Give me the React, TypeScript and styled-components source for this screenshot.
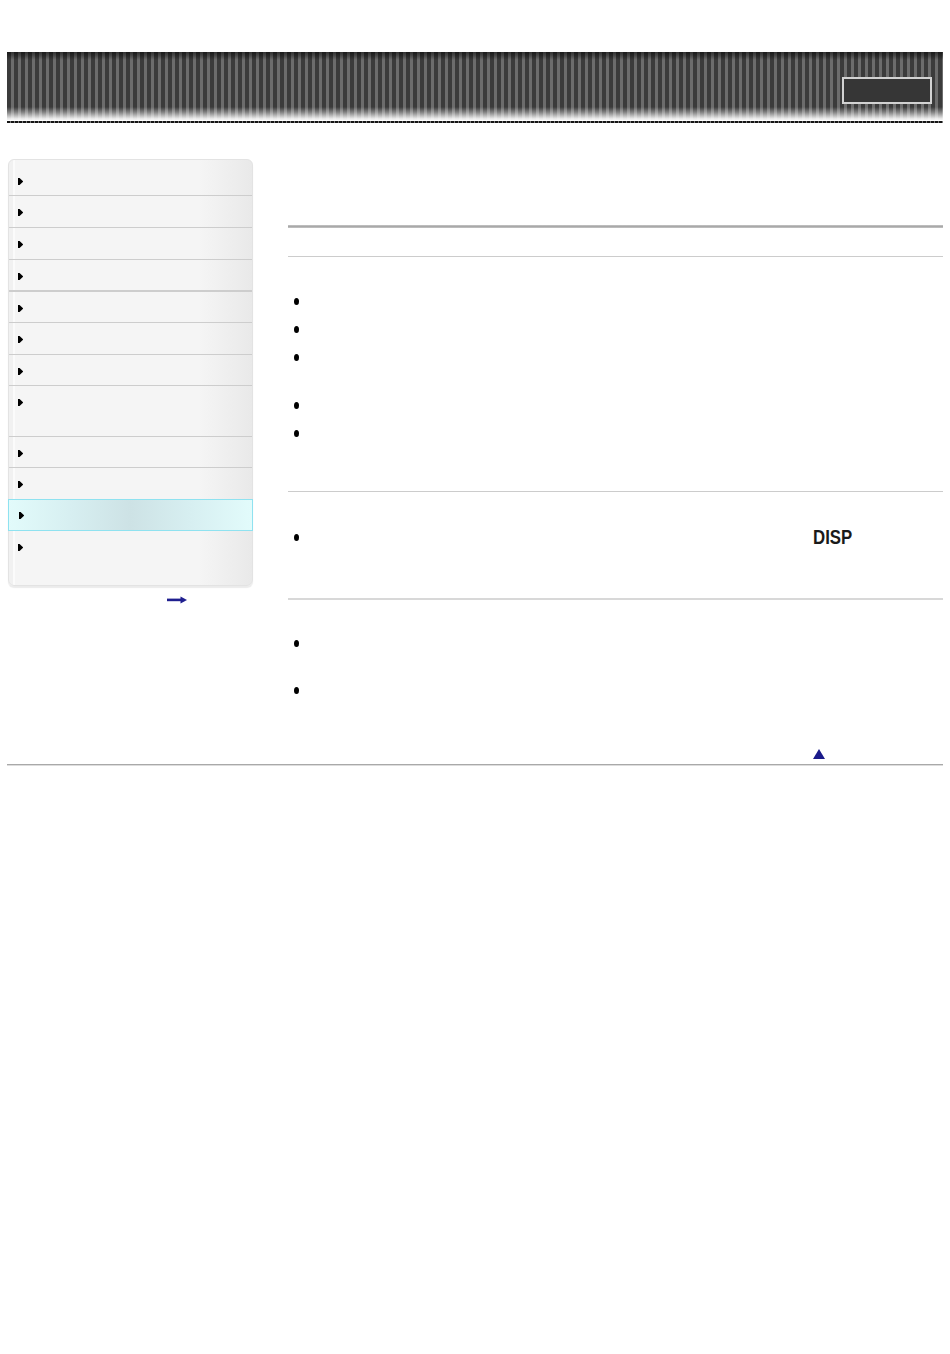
import styled, { createGlobalStyle } from "styled-components";

const GlobalStyle = createGlobalStyle`
  html, body {
    margin: 0;
    padding: 0;
    background: #fff;
  }
  body {
    font-family: "Liberation Sans", Arial, sans-serif;
    font-size: 13px;
    color: #000;
  }
  * {
    box-sizing: border-box;
  }
`;

const Page = styled.div`
  width: 950px;
  padding: 52px 7px 0;
`;

const Header = styled.header`
  height: 68px;
  display: flex;
  justify-content: flex-end;
  align-items: flex-start;
  padding: 25px 11px 0 0;
  background:
    linear-gradient(
      to bottom,
      rgba(0, 0, 0, 0.55) 0,
      rgba(0, 0, 0, 0.3) 4px,
      rgba(0, 0, 0, 0) 8px,
      rgba(0, 0, 0, 0) 55px,
      rgba(255, 255, 255, 0.35) 60px,
      rgba(255, 255, 255, 0.92) 67px
    ),
    repeating-linear-gradient(90deg, #3b3b3b 0 4px, #6c6c6c 4px 7px);
`;

const SearchBox = styled.div`
  width: 90px;
  height: 27px;
  border: 2px solid #d2d2d2;
  background: #363636;
`;

const DashRule = styled.div`
  height: 2px;
  margin-top: 1px;
  background: repeating-linear-gradient(90deg, #151515 0 3px, #7a7a7a 3px 4px);
`;

const Body = styled.div`
  display: flex;
  align-items: flex-start;
  margin-top: 36px;
`;

const SideColumn = styled.aside`
  width: 246px;
  flex: none;
  padding-left: 1px;
`;

const Nav = styled.nav`
  border: 1px solid #e3e3e3;
  border-radius: 6px;
  padding-top: 5px;
  box-shadow: 0 2px 1px rgba(0, 0, 0, 0.08);
  background: linear-gradient(
    to right,
    #f1f1f1 0,
    #f1f1f1 4px,
    #fbfbfb 4px,
    #fbfbfb 6px,
    #f5f5f5 6px,
    #f5f5f5 190px,
    #e9e9e9 100%
  );
`;

const NavItem = styled.div<{ $h: number; $border: number; $active?: boolean }>`
  height: ${(p) => p.$h}px;
  padding: ${(p) => (p.$active ? "12px 0 0 9px" : "13px 0 0 9px")};
  border-bottom: ${(p) => (p.$border ? `${p.$border}px solid #cdcdcd` : "none")};

  ${(p) =>
    p.$active &&
    `
    margin: 0 -1px;
    padding-left: 10px;
    border: 1px solid #8fe2f0;
    background: linear-gradient(
      to right,
      #e2fbfb 0%,
      #d7eff1 25%,
      #cde2e5 50%,
      #d7eff1 75%,
      #e2fbfb 100%
    );
  `}

  svg {
    display: block;
  }
`;

const NextRow = styled.div`
  display: flex;
  justify-content: flex-end;
  padding: 10px 66px 0 0;
`;

const Main = styled.main`
  flex: 1;
  margin-left: 35px;
`;

const Title = styled.div`
  height: 66px;
`;

const ThickRule = styled.div`
  height: 3px;
  background: linear-gradient(#c6c6c6, #a9a9a9 50%, #c6c6c6);
`;

const Subtitle = styled.div`
  height: 28px;
`;

const Rule = styled.div<{ $w?: number; $c?: string }>`
  height: ${(p) => p.$w ?? 1}px;
  background: ${(p) => p.$c ?? "#cccccc"};
`;

const List = styled.ul<{ $top: number; $bottom: number; $gap?: number }>`
  list-style: none;
  margin: ${(p) => p.$top}px 0 ${(p) => p.$bottom}px;
  padding: 0;
  display: flex;
  flex-direction: column;
  gap: ${(p) => p.$gap ?? 8}px;
`;

const Item = styled.li<{ $lines: number }>`
  display: flex;
  align-items: flex-start;
  height: ${(p) => p.$lines * 20}px;
  line-height: 20px;
`;

const Dot = styled.span`
  flex: none;
  width: 5px;
  height: 7px;
  margin: 7px 0 0 6px;
  border-radius: 50%;
  background: #000;
`;

const Text = styled.span`
  flex: 1;
  margin-left: 11px;
`;

const Key = styled.span`
  display: inline-block;
  margin-left: 503px;
  font-family: "Liberation Sans", Arial, sans-serif;
  font-weight: bold;
  font-size: 20px;
  line-height: 20px;
  color: #1a1a1a;
  transform: scaleX(0.84);
  transform-origin: left center;
`;

const BackTop = styled.div`
  display: flex;
  justify-content: flex-end;
  margin-top: 29px;
  padding-right: 118px;

  svg {
    display: block;
  }
`;

const Footer = styled.div`
  height: 2px;
  margin-top: 5px;
  background: linear-gradient(#a9a9a9 50%, #dddddd 50%);
`;

const NavArrow = () => (
  <svg width="5" height="7" viewBox="0 0 5 7">
    <path d="M0 0H1.6L5 3.2V3.8L1.6 7H0Z" fill="#000" />
  </svg>
);

const NextArrow = () => (
  <svg width="20" height="8" viewBox="0 0 20 8">
    <rect x="0" y="2.6" width="15" height="2.6" fill="#1f1f8f" />
    <path d="M13.5 0.4L20 3.9L13.5 7.6Z" fill="#1f1f8f" />
  </svg>
);

const UpTriangle = () => (
  <svg width="12" height="10" viewBox="0 0 12 10">
    <path d="M6 0L12 10H0Z" fill="#1a1a8a" />
  </svg>
);

// height incl. bottom border, border width
const navRows: { h: number; border: number; active?: boolean }[] = [
  { h: 31, border: 1 },
  { h: 32, border: 1 },
  { h: 32, border: 1 },
  { h: 32, border: 2 },
  { h: 31, border: 1 },
  { h: 32, border: 1 },
  { h: 31, border: 1 },
  { h: 51, border: 1 },
  { h: 31, border: 1 },
  { h: 31, border: 0 },
  { h: 32, border: 0, active: true },
  { h: 54, border: 0 },
];

export default function App() {
  return (
    <>
      <GlobalStyle />
      <Page>
        <Header>
          <SearchBox />
        </Header>
        <DashRule />
        <Body>
          <SideColumn>
            <Nav>
              {navRows.map((r, i) => (
                <NavItem key={i} $h={r.h} $border={r.border} $active={r.active}>
                  <NavArrow />
                </NavItem>
              ))}
            </Nav>
            <NextRow>
              <NextArrow />
            </NextRow>
          </SideColumn>
          <Main>
            <Title />
            <ThickRule />
            <Subtitle />
            <Rule />
            <List $top={34} $bottom={28}>
              <Item $lines={1}><Dot /><Text /></Item>
              <Item $lines={1}><Dot /><Text /></Item>
              <Item $lines={2}><Dot /><Text /></Item>
              <Item $lines={1}><Dot /><Text /></Item>
              <Item $lines={2}><Dot /><Text /></Item>
            </List>
            <Rule />
            <List $top={35} $bottom={31}>
              <Item $lines={2}>
                <Dot />
                <Text>
                  <Key>DISP</Key>
                </Text>
              </Item>
            </List>
            <Rule $w={2} $c="#d8d8d8" />
            <List $top={33} $bottom={0} $gap={7}>
              <Item $lines={2}><Dot /><Text /></Item>
              <Item $lines={2}><Dot /><Text /></Item>
            </List>
            <BackTop>
              <UpTriangle />
            </BackTop>
          </Main>
        </Body>
        <Footer />
      </Page>
    </>
  );
}
